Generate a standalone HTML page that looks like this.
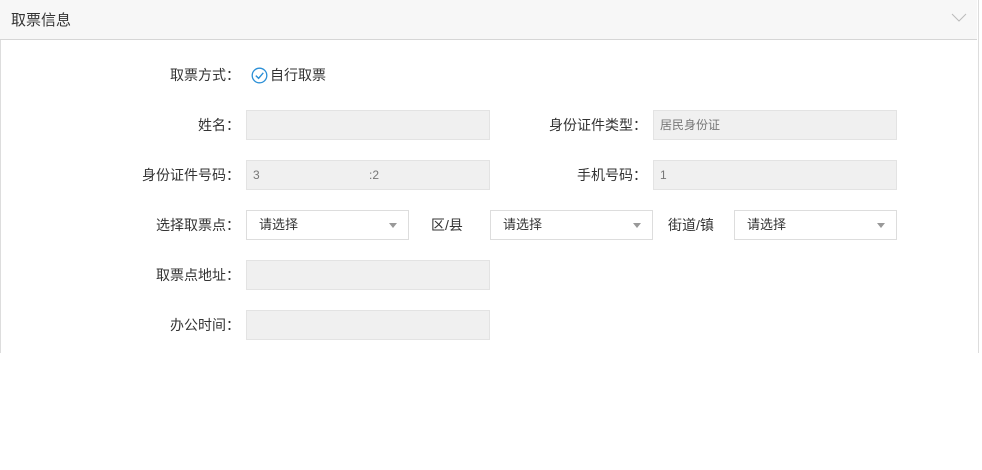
<!DOCTYPE html>
<html><head><meta charset="utf-8"><style>
body{margin:0;width:982px;height:470px;background:#fff;font-family:"Liberation Sans","Noto Sans CJK SC",sans-serif;font-size:13px;color:#333;position:relative;overflow:hidden}
.panel{position:absolute;left:0;top:0;width:977px;height:353px;border-left:1px solid #ddd;border-right:1px solid #ddd}
.hd{position:absolute;left:0;top:0;width:977px;height:39px;background:#f7f7f7;border-bottom:1px solid #d6d6d6}
.hd span{position:absolute;left:11px;top:9px;font-size:15px;color:#333}
.a{position:absolute}
.lbl{position:absolute;text-align:right;width:200px;font-size:14px;color:#333;line-height:30px}
.t{position:absolute;font-size:14px;line-height:30px;color:#333}
.in{position:absolute;height:28px;background:#f0f0f0;border:1px solid #e3e3e3;font-size:12px;color:#777;line-height:28px;padding-left:6px;box-sizing:content-box}
.sel{position:absolute;height:28px;background:#fff;border:1px solid #ddd;font-size:13px;color:#333;line-height:28px;padding-left:12px}
.sel:after{content:"";position:absolute;right:11px;top:12px;border-left:4px solid transparent;border-right:4px solid transparent;border-top:5px solid #999}
</style></head><body>
<div class="panel"></div>
<div class="hd"><span>取票信息</span>
<svg class="a" style="left:951px;top:12px" width="16" height="10"><path d="M1 2 L8 9 L15 2" fill="none" stroke="#bbb" stroke-width="1"/></svg></div>

<div class="lbl" style="left:40px;top:60px">取票方式：</div>
<svg class="a" style="left:251px;top:67px" width="17" height="17"><circle cx="8.5" cy="8.5" r="7.3" fill="none" stroke="#2b8fd6" stroke-width="1.3"/><path d="M4.8 8.6 L7.6 11.3 L12.3 5.8" fill="none" stroke="#2b8fd6" stroke-width="1.4"/></svg>
<div class="t" style="left:270px;top:60px">自行取票</div>

<div class="lbl" style="left:40px;top:110px">姓名：</div>
<div class="in" style="left:246px;top:110px;width:236px"></div>
<div class="lbl" style="left:447px;top:110px">身份证件类型：</div>
<div class="in" style="left:653px;top:110px;width:236px">居民身份证</div>

<div class="lbl" style="left:40px;top:160px">身份证件号码：</div>
<div class="in" style="left:246px;top:160px;width:236px">3<span style="position:absolute;left:122px">:2</span></div>
<div class="lbl" style="left:447px;top:160px">手机号码：</div>
<div class="in" style="left:653px;top:160px;width:236px">1</div>

<div class="lbl" style="left:40px;top:210px">选择取票点：</div>
<div class="sel" style="left:246px;top:210px;width:149px">请选择</div>
<div class="t" style="left:431px;top:210px">区/县</div>
<div class="sel" style="left:490px;top:210px;width:149px">请选择</div>
<div class="t" style="left:668px;top:210px">街道/镇</div>
<div class="sel" style="left:734px;top:210px;width:149px">请选择</div>

<div class="lbl" style="left:40px;top:260px">取票点地址：</div>
<div class="in" style="left:246px;top:260px;width:236px"></div>
<div class="lbl" style="left:40px;top:310px">办公时间：</div>
<div class="in" style="left:246px;top:310px;width:236px"></div>
</body></html>
